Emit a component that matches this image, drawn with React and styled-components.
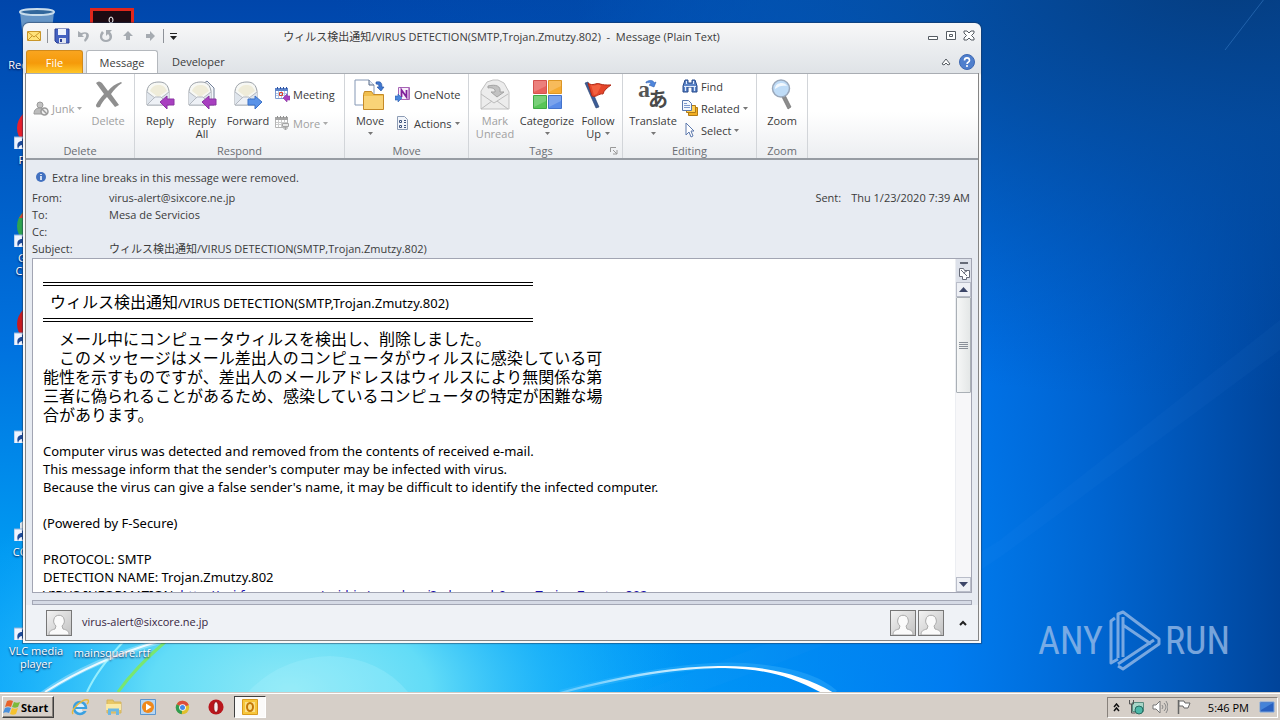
import React from "react";
import styled, { createGlobalStyle, css } from "styled-components";

const GlobalStyle = createGlobalStyle`
  * {
    box-sizing: border-box;
  }
  body {
    margin: 0;
    font-family: "Open Sans", "Noto Sans CJK JP", sans-serif;
    font-size: 11px;
    line-height: 13px;
    color: #3b3b3b;
  }
  button {
    padding: 0;
    border: 0;
    background: none;
    font: inherit;
    color: inherit;
  }
`;

/* ---------- desktop ---------- */

const Desktop = styled.div`
  display: flex;
  flex-direction: column;
  min-height: 100vh;
`;
const Screen = styled.main`
  flex: 1;
  position: relative;
  overflow: hidden;
  background: #0078e4;
`;
const WallpaperSvg = styled.svg`
  position: absolute;
  width: 100%;
  height: 100%;
`;
const Shortcut = styled.button`
  position: absolute;
  left: ${(props) => props.$x}px;
  top: ${(props) => props.$y}px;
  width: 74px;
  display: flex;
  flex-direction: column;
  align-items: center;
  color: #fff;
  text-shadow: 0 1px 2px #003;
  svg {
    margin-bottom: 4px;
  }
`;
const Watermark = styled.div`
  position: absolute;
  right: 50px;
  bottom: 19px;
  display: flex;
  align-items: center;
  gap: 3px;
  font-family: "Roboto Condensed", "Liberation Sans Narrow", "DejaVu Sans Condensed", sans-serif;
  font-size: 38px;
  line-height: 64px;
  color: #9fc0ea;
  opacity: 0.75;
`;

/* ---------- window ---------- */

const Window = styled.section`
  position: absolute;
  left: 23px;
  top: 23px;
  width: 958px;
  height: 620px;
  display: flex;
  flex-direction: column;
  padding: 1px 2px 2px;
  border-radius: 6px 6px 0 0;
  background: linear-gradient(#f7f7f8, #dfe3e7 50px, #f8f8f8 52px);
  box-shadow: 0 0 1px 1px rgba(30, 50, 80, 0.5);
`;
const TitleBar = styled.header`
  display: grid;
  grid-template-columns: 1fr auto 1fr;
  align-items: center;
  height: 26px;
  padding: 0 2px 2px 1px;
`;
const QuickAccess = styled.div`
  display: flex;
  align-items: center;
  gap: 6px;
`;
const Divider = styled.span`
  width: 1px;
  height: 14px;
  margin-left: -1px;
  background: #8e9299;
`;
const IconButton = styled.button`
  display: flex;
  width: 16px;
  height: 16px;
  align-items: center;
  justify-content: center;
`;
const Title = styled.h1`
  margin: 0;
  font-size: 11px;
  font-weight: 400;
  white-space: pre;
`;
const WindowControls = styled.div`
  display: flex;
  justify-content: flex-end;
  gap: 2px;
`;
const TabRow = styled.nav`
  display: flex;
  align-items: stretch;
  height: 23px;
  padding-right: 4px;
`;
const Tab = styled.button`
  padding: 0 12px;
  ${(props) =>
    props.$file &&
    css`
      width: 57px;
      margin: 0 3px 0 1px;
      border: 1px solid #d08a1c;
      border-bottom: 0;
      border-radius: 3px 3px 0 0;
      background: linear-gradient(#f9a51f, #f59a0a 55%, #ffc627);
      color: #fff;
    `}
  ${(props) =>
    props.$active &&
    css`
      width: 72px;
      margin: 0 2px 0 0;
      padding: 0;
      border: 1px solid #b4b8bd;
      border-bottom: 0;
      border-radius: 3px 3px 0 0;
      background: #fff;
    `}
`;
const TabTools = styled.div`
  display: flex;
  align-items: center;
  gap: 5px;
  margin-left: auto;
`;
const Pane = styled.div`
  flex: 1;
  min-height: 0;
  display: flex;
  flex-direction: column;
  border: 1px solid #858585;
  border-top: 0;
  background: #e7ebf2;
`;

/* ---------- ribbon ---------- */

const Ribbon = styled.div`
  display: flex;
  height: 87px;
  border-top: 1px solid #a9adb3;
  border-bottom: 2px solid #979ca3;
  background: linear-gradient(#fff 45%, #eceef1);
`;
const Group = styled.div`
  width: ${(props) => props.$width}px;
  display: flex;
  flex-direction: column;
  border-right: 1px solid #d2d5d9;
`;
const GroupBody = styled.div`
  flex: 1;
  display: flex;
  align-items: flex-start;
  padding-left: ${(props) => props.$pad}px;
`;
const GroupFooter = styled.div`
  display: flex;
  align-items: center;
  height: 15px;
  padding: 0 4px;
  color: #6a6d72;
  span {
    flex: 1;
    text-align: center;
  }
`;
const BigButton = styled.button`
  width: ${(props) => props.$width}px;
  display: flex;
  flex-direction: column;
  align-items: center;
  padding-top: 5px;
  &:disabled {
    color: #a0a0a0;
  }
  > svg:first-child {
    margin-bottom: 3px;
  }
`;
const InlineCaret = styled.span`
  display: flex;
  align-items: center;
  gap: 4px;
`;
const SmallColumn = styled.div`
  display: flex;
  flex-direction: column;
  gap: ${(props) => props.$gap || 0}px;
  padding-top: ${(props) => props.$top}px;
  margin-left: 1px;
`;
const SmallButton = styled.button`
  display: flex;
  align-items: center;
  gap: 3px;
  height: 22px;
  white-space: nowrap;
  &:disabled {
    color: #a0a0a0;
  }
`;

/* ---------- message ---------- */

const MessageHead = styled.div`
  padding: 8px 6px 1px;
`;
const InfoBar = styled.div`
  display: flex;
  align-items: center;
  gap: 5px;
  height: 18px;
  margin: 0 3px 3px;
`;
const FieldList = styled.dl`
  margin: 0;
`;
const Field = styled.div`
  display: flex;
  line-height: 17px;
  height: 17px;
  dt {
    width: 77px;
  }
  dd {
    margin: 0;
  }
`;
const Sent = styled.span`
  display: flex;
  gap: 10px;
  margin-left: auto;
  padding-right: 2px;
`;
const BodyBox = styled.div`
  flex: 1;
  min-height: 0;
  display: flex;
  margin: 0 6px;
  border: 1px solid #a2a5b3;
  background: #fff;
`;
const MessageText = styled.article`
  flex: 1;
  overflow: hidden;
  padding: 16px 10px 0;
  font-family: "Noto Sans", "Noto Sans CJK JP", sans-serif;
  font-size: 13px;
  line-height: 18px;
  color: #000;
  p {
    margin: 0 0 18px;
    white-space: nowrap;
  }
  a {
    color: #1a0dab;
  }
`;
const Rule = styled.hr`
  width: 490px;
  height: 4px;
  margin: 7px 0;
  border: solid #000;
  border-width: 1px 0;
`;
const Heading = styled.h2`
  height: 18px;
  margin: 0;
  padding-left: 7px;
  font-size: 13px;
  font-weight: 400;
  line-height: 16px;
`;
const Kanji = styled.span`
  font-family: "Noto Sans CJK JP", sans-serif;
  font-size: 16px;
`;
const Japanese = styled.p`
  font-family: "Noto Sans CJK JP", sans-serif;
  font-size: 16px;
  line-height: 19px;
`;
const Scrollbar = styled.div`
  width: 16px;
  display: flex;
  flex-direction: column;
  border-left: 1px solid #eceef2;
  background: #f7f7f9;
`;
const ScrollHead = styled.div`
  display: flex;
  flex-direction: column;
  align-items: center;
  height: 23px;
  padding-top: 2px;
  background: #dde1ea;
`;
const ScrollButton = styled.button`
  display: flex;
  align-items: center;
  justify-content: center;
  height: 15px;
  border: 1px solid #b9bdc9;
  background: #eef0f5;
`;
const Thumb = styled.div`
  height: 96px;
  display: flex;
  align-items: center;
  justify-content: center;
  border: 1px solid #aab0b6;
  border-radius: 1px;
  background: linear-gradient(90deg, #f6f7f7, #e4e7e7);
  margin-bottom: auto;
`;
const Splitter = styled.div`
  height: 5px;
  margin: 7px 6px 0;
  border: 1px solid #a3a7b5;
  background: #d5dae5;
`;
const People = styled.footer`
  display: flex;
  align-items: center;
  height: 35px;
  padding: 0 7px 0 20px;
  background: #eff2f6;
  color: #36253f;
`;
const Avatar = styled.svg`
  width: 26px;
  height: 26px;
  border: 1px solid #777;
  background: linear-gradient(135deg, #f2f2f2, #c2c2c2);
`;
const PersonName = styled.span`
  flex: 1;
  padding: 0 0 2px 10px;
`;
const Recipients = styled.div`
  display: flex;
  gap: 2px;
  margin-right: 11px;
`;

/* ---------- taskbar ---------- */

const Taskbar = styled.footer`
  display: flex;
  align-items: center;
  height: 28px;
  padding: 1px 2px 0;
  border-top: 1px solid #cfcac4;
  background: #d6cfc8;
  box-shadow: inset 0 1px #fff;
  color: #000;
`;
const StartButton = styled.button`
  display: flex;
  align-items: center;
  width: 52px;
  height: 22px;
  margin-right: 10px;
  border: 1px solid;
  border-color: #fff #404040 #404040 #fff;
  box-shadow: inset -1px -1px #87817b;
  font-weight: 700;
`;
const TaskButton = styled.button`
  display: flex;
  align-items: center;
  justify-content: center;
  width: 32px;
  height: 22px;
  margin-right: 2px;
  ${(props) =>
    props.$pressed &&
    css`
      border: 1px solid;
      border-color: #404040 #fff #fff #404040;
      background: #fbfaf9;
    `}
`;
const Tray = styled.div`
  display: flex;
  align-items: center;
  gap: 8px;
  height: 21px;
  margin-left: auto;
  padding: 0 2px 0 5px;
  border: 1px solid;
  border-color: #87817b #fff #fff #87817b;
`;
const Clock = styled.time`
  padding: 0 2px 0 8px;
`;

/* ---------- drawings ---------- */

const Svg = ({ w = 16, h = w, box, children }) => (
  <svg width={w} height={h} viewBox={`0 0 ${box || `${w} ${h}`}`} aria-hidden="true" fill="none">
    {children}
  </svg>
);

const Caret = ({ color = "#777" }) => (
  <Svg w={5} h={3}>
    <path d="M0 0h5L2.5 3z" fill={color} />
  </Svg>
);

const MenuCaret = () => (
  <Svg w={5} h={13}>
    <path d="M0 5h5L2.500 8z" fill="#777" />
  </Svg>
);

const Wallpaper = () => (
  <WallpaperSvg viewBox="0 0 1280 692" preserveAspectRatio="none" aria-hidden="true">
    <defs>
      <linearGradient id="sky" x1="0" y1="0" x2="0" y2="1">
        <stop offset="0" stopColor="#0046ab" />
        <stop offset=".5" stopColor="#0072df" />
        <stop offset=".8" stopColor="#009af2" />
        <stop offset="1" stopColor="#00a0fa" />
      </linearGradient>
      <linearGradient id="shade" x1="0" y1="0" x2="1" y2="0">
        <stop offset=".45" stopColor="#0078ee" stopOpacity="0" />
        <stop offset=".74" stopColor="#0074ee" stopOpacity=".8" />
        <stop offset=".86" stopColor="#005fcc" stopOpacity=".9" />
        <stop offset="1" stopColor="#00449a" />
      </linearGradient>
      <radialGradient id="dusk" gradientUnits="userSpaceOnUse" cx="0" cy="0" r="1" gradientTransform="translate(1230 -20) scale(900 420)">
        <stop offset="0" stopColor="#053d80" />
        <stop offset=".35" stopColor="#044a9c" stopOpacity=".85" />
        <stop offset="1" stopColor="#0052b4" stopOpacity="0" />
      </radialGradient>
      <radialGradient id="glow" gradientUnits="userSpaceOnUse" cx="0" cy="0" r="1" gradientTransform="translate(290 690) scale(400 220)">
        <stop offset="0" stopColor="#8ee9f6" />
        <stop offset=".35" stopColor="#62dcf7" />
        <stop offset=".65" stopColor="#2fc0fa" stopOpacity=".6" />
        <stop offset="1" stopColor="#18a8fc" stopOpacity="0" />
      </radialGradient>
      <linearGradient id="arc" x1="0" y1="0" x2="1" y2="0">
        <stop offset="0" stopColor="#7fd4ff" stopOpacity=".7" />
        <stop offset=".6" stopColor="#fff" />
        <stop offset="1" stopColor="#fff" />
      </linearGradient>
    </defs>
    <rect width="1280" height="692" fill="url(#sky)" />
    <rect width="1280" height="692" fill="url(#shade)" />
    <rect width="1280" height="692" fill="url(#dusk)" />
    <rect width="1280" height="692" fill="url(#glow)" />
    <path d="M850 612Q930 585 1000 540L1280 320V350L1010 550Q930 610 700 692H640z" fill="#5cb8ff" opacity=".04" />
    <path d="M1225 50L1268 -6" stroke="#3d82cc" strokeWidth="1" opacity=".5" />
    <path d="M42 694Q90 660 165 640" stroke="#fff" strokeWidth="5" opacity=".3" fill="none" />
    <path d="M45 692Q95 660 160 641" stroke="#fff" strokeWidth="2" fill="none" opacity=".85" />
    <path d="M87 692Q98 668 125 640" stroke="#bff" strokeWidth="2" fill="none" opacity=".7" />
    <path d="M118 692Q135 668 165 642" stroke="#7de860" strokeWidth="3" fill="none" opacity=".9" />
    <path d="M248 692Q280 658 330 656Q380 658 408 692" fill="#aef2ff" opacity=".25" />
    <path d="M560 693Q680 662 745 666T835 693" stroke="#5cc6ff" strokeWidth="6" fill="none" opacity=".25" />
    <path d="M560 692C640 670 690 666 725 666C770 666 805 676 834 693L822 693C790 676 765 669 725 668C690 668 640 673 564 693z" fill="url(#arc)" />
  </WallpaperSvg>
);

const ShortcutArrow = () => (
  <g>
    <path d="M4 22h12v14H4z" fill="#eef4ff" stroke="#8fb4dd" />
    <path d="M8 34c-2-6 1-8 4-8v-3l5 5-5 5v-3c-2 0-3 1-4 4z" fill="#1c4a9a" />
  </g>
);

const shortcuts = [
  { y: 109, color: "#e8202c", label: "Firefox" },
  { y: 207, color: "#2fa44f", top: "#d9432f", label: "Google Chrome" },
  { y: 305, color: "#c91a1f" },
  { y: 403, color: "none" },
  { y: 501, color: "none", box: true, label: "CCleaner" },
  { y: 600, color: "none", label: "VLC media player" },
];

const Letter = ({ arrow, copy }) => (
  <Svg w={32}>
    {copy && <path d="M13 8l8-6 7 7v17h-8" fill="#f4f7fb" stroke="#728098" />}
    <path d="M3 12C4 5 9 3 15 3s9 3 10 9v14H3z" fill="#f7f8f4" stroke="#9ba1a8" />
    <path d="M6 12c2-5 5-6 9-6s6 2 8 6l-9 6z" fill="#efecd9" />
    <path d="M3 12l7 7-7 7zM25 12l-7 7 7 7z" fill="#dfe5ec" />
    <path d="M3 26l8-8h6l8 8z" fill="#eef1f6" stroke="#b4b9c1" />
    <path d="M3 13l8 6M25 13l-8 6" stroke="#b4b9c1" />
    {arrow === "reply" && <path d="M16 23l7-6v3h7v6h-7v4z" fill="#a83fc0" stroke="#8a35a2" />}
    {arrow === "forward" && <path d="M30 23l-7-6v3h-7v6h7v4z" fill="#5a93e8" stroke="#3c72c8" />}
  </Svg>
);

const MarkUnreadIcon = () => (
  <Svg w={32}>
    <path d="M2 12l6-9 6-2h5l6 3 5 9v17H2z" fill="#ececec" stroke="#c0c0c0" />
    <path d="M2 15l13 9 14-9M2 30l11-8M29 30l-11-8" stroke="#bcbcbc" />
    <path d="M9 7c8-2 13 0 12 6h4l-7 5-6-5h4c1-3-3-5-7-4z" fill="#c2c2c2" stroke="#a3a3a3" />
  </Svg>
);

const DeleteIcon = () => (
  <Svg w={32}>
    <path d="M4 4c2-2 4-2 6 0l6 8c3-4 7-7 13-9l1 1c-5 3-8 7-11 11l8 11-4 2-8-10c-4 4-6 7-7 10-3 1-4 0-4-2 2-4 5-8 8-11z" fill="#8f8f8f" />
  </Svg>
);

const JunkIcon = () => (
  <Svg>
    <circle cx="7" cy="5" r="3" fill="#c2c2c2" stroke="#9a9a9a" />
    <path d="M1 14c0-5 3-6 6-6s5 2 5 6z" fill="#bcbcbc" stroke="#9a9a9a" />
    <circle cx="11.500" cy="11.500" r="3.500" fill="#eee" stroke="#9a9a9a" strokeWidth="1.500" />
    <path d="M9 9l5 5" stroke="#9a9a9a" strokeWidth="1.500" />
  </Svg>
);

const CalendarIcon = ({ gray }) => (
  <Svg>
    <path d="M1.500 3.500h12v9h-12z" fill="#fff" stroke={gray ? "#b5b5b5" : "#7c9ad0"} />
    <path d="M1 2h13v3H1z" fill={gray ? "#a5a5a5" : "#5c83ca"} />
    <path d="M3.500 1v2M6.500 1v2M9.500 1v2M12.500 1v2" stroke={gray ? "#909090" : "#2c51a0"} />
    <path d="M2 7.500h11M2 9.500h11M4.500 5v7M7.500 5v7M10.500 5v7" stroke={gray ? "#ccc" : "#b3c6e6"} />
    {gray ? (
      <path d="M8.500 8.500h6v3h-6zM11.500 12v3m-2-2l2 2 2-2" fill="#e9e9e9" stroke="#a5a5a5" />
    ) : (
      <>
        <path d="M5.500 6.500h3v3h-3z" stroke="#d9422b" />
        <path d="M9 12l4-4v2h3v4h-3v2z" fill="#a83fc0" stroke="#8a35a2" strokeWidth=".6" />
      </>
    )}
  </Svg>
);

const MoveIcon = () => (
  <Svg w={32}>
    <path d="M1 1h14l5 5v20H1z" fill="#fff" stroke="#8598b5" />
    <path d="M15 1v5h5" fill="#dfe8f4" stroke="#596b88" />
    <path d="M9.500 15.500l1-3h7l2 3h10v15h-20z" fill="#f0be4d" stroke="#c58a27" />
    <path d="M10 17h19v13H10z" fill="#f9d377" />
    <path d="M22 3c5-1 6 1 6 5h2l-3 4-4-4h2c0-2-1-3-3-3z" fill="#3f77cf" stroke="#244f9e" strokeWidth=".6" />
  </Svg>
);

const OneNoteIcon = () => (
  <Svg>
    <path d="M3.500 1.500h11v12h-11z" fill="#f8eefa" stroke="#a765b6" />
    <path d="M6.500 11V4l5 7V4" stroke="#80219a" strokeWidth="1.800" />
    <path d="M13.500 2v11" stroke="#c48bd0" />
    <path d="M0 10h3V8l4 4-4 4v-2H0z" fill="#4a86dc" stroke="#2b5fb0" strokeWidth=".6" />
  </Svg>
);

const ActionsIcon = () => (
  <Svg>
    <path d="M2.500 1.500h7l3 3v10h-10z" fill="#f2f5fa" stroke="#8d9cb5" />
    <path d="M4.500 5.500h2v2h-2zM4.500 10.500h2v2h-2z" fill="#fff" stroke="#3f5580" />
    <path d="M9 5.500h2M9 7.500h2M9 10.500h2M9 12.500h2" stroke="#3f5580" />
  </Svg>
);

const CategorizeIcon = () => (
  <Svg w={32}>
    <path d="M2.500 1.500h13v13h-13z" fill="#e8615c" stroke="#d4524e" />
    <path d="M17.500 1.500h13v13h-13z" fill="#f5ab33" stroke="#dc9625" />
    <path d="M2.500 16.500h13v13h-13z" fill="#58c558" stroke="#3fa844" />
    <path d="M17.500 16.500h13v13h-13z" fill="#5a8ce8" stroke="#4473cc" />
    <path d="M3 2h12v5L3 13zM18 2h12v5l-12 6zM3 17h12v5L3 28zM18 17h12v5l-12 6z" fill="#fff" opacity=".2" />
  </Svg>
);

const FlagIcon = () => (
  <Svg w={32}>
    <path d="M3 4l3-1 11 25-3 1z" fill="#3c5c96" stroke="#27406f" strokeWidth=".6" />
    <path d="M6 4c5 4 8-1 12 1 3 1 6 1 11 1-4 3-7 5-8 9-4-1-7 4-11 2z" fill="#e5452a" stroke="#b02a16" />
    <path d="M9 6c4 2 7-2 10 1l-4 8-3 1z" fill="#ff7d55" opacity=".5" />
  </Svg>
);

const TranslateIcon = () => (
  <Svg w={32}>
    <text x="1" y="18" fontFamily="Liberation Serif" fontSize="24" fontWeight="700" fill="#555">
      a
    </text>
    <text x="11" y="28" fontFamily="Noto Sans CJK JP" fontSize="20" fontWeight="700" fill="#4a4a4a">
      あ
    </text>
    <path d="M9 3c5-3 8-1 8 1l2-1-2 5-5-2 2-1c0-1-2-2-5-1z" fill="#4e86dd" stroke="#2b5db0" strokeWidth=".6" />
  </Svg>
);

const FindIcon = () => (
  <Svg>
    <path d="M3 2h3v3h4V2h3l2 6v6h-5V9H6v5H1V8z" fill="#5c84c6" stroke="#25488a" />
    <path d="M3.500 9v4M12.500 9v4M4.500 3v3M11.500 3v3M2 8.500h12" stroke="#e0ebfc" />
  </Svg>
);

const RelatedIcon = () => (
  <Svg>
    <path d="M6.500 7.500h9v8h-9z" fill="#f2ae22" stroke="#b07a14" />
    <path d="M4.500 5.500h9v7h-9z" fill="#ffd055" stroke="#b07a14" />
    <path d="M.5.5h6l3 3v7h-9z" fill="#f4f8fe" stroke="#5b78ad" />
    <path d="M2 3.500h3M2 5.500h6M2 7.500h6" stroke="#7f9bcf" />
  </Svg>
);

const SelectIcon = () => (
  <Svg>
    <path d="M4 1l8 8H9l2 5-2 1-2-5-3 3z" fill="#fff" stroke="#5c79ad" />
  </Svg>
);

const ZoomIcon = () => (
  <Svg w={32}>
    <path d="M16 18l3-2 6 12-3 2z" fill="#8d8d8d" stroke="#666" strokeWidth=".6" />
    <circle cx="15" cy="9.500" r="8.500" fill="#bfdcf7" stroke="#9aa8bb" strokeWidth="1.500" />
    <path d="M9 10c0-4 3-6 7-6 2 0 4 1 5 3-5-1-8 0-12 3z" fill="#fff" opacity=".8" />
  </Svg>
);

const InfoIcon = () => (
  <Svg w={12}>
    <circle cx="6" cy="6" r="5" fill="#4271c0" />
    <path d="M6 5v4M6 3v1" stroke="#fff" strokeWidth="1.500" />
  </Svg>
);

const Person = () => (
  <Avatar viewBox="0 0 24 24" aria-hidden="true">
    <path d="M2 24c0-4 2-5 6-6l1-3c-2-2-3-4-2-7 1-5 9-5 10 0 1 3 0 5-2 7l1 3c4 1 6 2 6 6z" fill="#fafafa" stroke="#aaa" />
  </Avatar>
);

const WindowsLogo = () => (
  <Svg w={18}>
    <path d="M4 3c2-1 4-1 6 0L8 9c-2-1-4-1-6 0z" fill="#e8622a" />
    <path d="M11 4c2 1 4 1 6 0l-2 5c-2 1-4 1-6 0z" fill="#7cba3c" />
    <path d="M2 10c2-1 4-1 6 0l-2 5c-2-1-4-1-6 0z" fill="#4a90dc" />
    <path d="M9 10c2 1 4 1 6 0l-2 6c-2 1-4 1-6 0z" fill="#f6c22e" />
  </Svg>
);

const IeIcon = () => (
  <Svg w={18}>
    <circle cx="9" cy="10" r="6" fill="#d9effc" stroke="#3ba0e0" strokeWidth="2.500" />
    <path d="M4 10h11" stroke="#3ba0e0" strokeWidth="2" />
    <path d="M11 12h6" stroke="#d6cfc8" strokeWidth="2" />
    <path d="M2 16C-1 12 12 0 17 2c1 1 0 3-1 4" stroke="#e8b93a" strokeWidth="1.500" />
  </Svg>
);

const ExplorerIcon = () => (
  <Svg w={18}>
    <path d="M2 2h6l1 2h7v11H2z" fill="#e8c766" stroke="#d4b45c" />
    <path d="M1 6h15v6H1z" fill="#fbe9a5" />
    <path d="M4.500 17v-5h8v5" stroke="#6cb8e4" strokeWidth="3" />
  </Svg>
);

const MediaIcon = () => (
  <Svg w={18}>
    <path d="M1.500 1.500h15v15h-15z" fill="#b7d6f2" stroke="#5b96cf" />
    <circle cx="9" cy="9" r="6" fill="#f0881b" />
    <path d="M7 5.500v7l5.500-3.500z" fill="#fff" />
  </Svg>
);

const ChromeIcon = () => (
  <Svg w={15} box="18 18">
    <circle cx="9" cy="9" r="8" fill="#e0c02f" />
    <path d="M9 9L2 5a8 8 0 0 1 14.500 1z" fill="#db4b3c" />
    <path d="M9 9L2 5a8 8 0 0 0 6 12z" fill="#2f9c52" />
    <circle cx="9" cy="9" r="4" fill="#fff" />
    <circle cx="9" cy="9" r="3" fill="#4688e8" />
  </Svg>
);

const OperaIcon = () => (
  <Svg w={16} box="18 18">
    <circle cx="9" cy="9" r="8.500" fill="#b9161c" />
    <ellipse cx="9" cy="9" rx="2.500" ry="6" fill="#f5f0f0" stroke="#8c0c10" />
  </Svg>
);

const OutlookIcon = () => (
  <Svg w={18}>
    <path d="M1.500 1.500h15v15h-15z" fill="#f7c63b" stroke="#d99a1c" />
    <path d="M4 4h10v10H4z" fill="#fbe08a" />
    <ellipse cx="9" cy="9" rx="3" ry="4" stroke="#c47808" strokeWidth="2" />
  </Svg>
);

const ToolGlyph = ({ d }) => (
  <Svg>
    <path d={d} fill="#a6abb1" />
  </Svg>
);

/* ---------- page ---------- */

const taskItems = [
  { name: "Internet Explorer", icon: <IeIcon /> },
  { name: "Windows Explorer", icon: <ExplorerIcon /> },
  { name: "Media Player", icon: <MediaIcon /> },
  { name: "Chrome", icon: <ChromeIcon /> },
  { name: "Opera", icon: <OperaIcon /> },
  { name: "Outlook", icon: <OutlookIcon />, pressed: true },
];

const subject = "ウィルス検出通知/VIRUS DETECTION(SMTP,Trojan.Zmutzy.802)";

const RibbonGroup = ({ name, width, pad, launcher, children }) => (
  <Group $width={width}>
    <GroupBody $pad={pad}>{children}</GroupBody>
    <GroupFooter>
      <span>{name}</span>
      {launcher && (
        <Svg w={9}>
          <path d="M1.500 6V1.500H7M4 4l4 4M8 4v4H4" stroke="#999" />
        </Svg>
      )}
    </GroupFooter>
  </Group>
);

const MessageRibbon = () => (
  <Ribbon>
    <RibbonGroup name="Delete" width={109} pad={6}>
      <SmallColumn $top={23}>
        <SmallButton disabled>
          <JunkIcon />
          Junk
          <Caret color="#aaa" />
        </SmallButton>
      </SmallColumn>
      <BigButton $width={52} disabled>
        <DeleteIcon />
        Delete
      </BigButton>
    </RibbonGroup>
    <RibbonGroup name="Respond" width={210} pad={4}>
      <BigButton $width={42}>
        <Letter arrow="reply" />
        Reply
      </BigButton>
      <BigButton $width={42}>
        <Letter arrow="reply" copy />
        Reply
        <br />
        All
      </BigButton>
      <BigButton $width={50}>
        <Letter arrow="forward" />
        Forward
      </BigButton>
      <SmallColumn $top={9} $gap={7}>
        <SmallButton>
          <CalendarIcon />
          Meeting
        </SmallButton>
        <SmallButton disabled>
          <CalendarIcon gray />
          More
          <Caret color="#aaa" />
        </SmallButton>
      </SmallColumn>
    </RibbonGroup>
    <RibbonGroup name="Move" width={124} pad={1}>
      <BigButton $width={48}>
        <MoveIcon />
        Move
        <MenuCaret />
      </BigButton>
      <SmallColumn $top={9} $gap={7}>
        <SmallButton>
          <OneNoteIcon />
          OneNote
        </SmallButton>
        <SmallButton>
          <ActionsIcon />
          Actions
          <Caret />
        </SmallButton>
      </SmallColumn>
    </RibbonGroup>
    <RibbonGroup name="Tags" width={154} pad={3} launcher>
      <BigButton $width={46} disabled>
        <MarkUnreadIcon />
        Mark
        <br />
        Unread
      </BigButton>
      <BigButton $width={58}>
        <CategorizeIcon />
        Categorize
        <MenuCaret />
      </BigButton>
      <BigButton $width={44}>
        <FlagIcon />
        Follow
        <InlineCaret>
          Up
          <Caret />
        </InlineCaret>
      </BigButton>
    </RibbonGroup>
    <RibbonGroup name="Editing" width={134} pad={2}>
      <BigButton $width={56}>
        <TranslateIcon />
        Translate
        <MenuCaret />
      </BigButton>
      <SmallColumn $top={1}>
        <SmallButton>
          <FindIcon />
          Find
        </SmallButton>
        <SmallButton>
          <RelatedIcon />
          Related
          <Caret />
        </SmallButton>
        <SmallButton>
          <SelectIcon />
          Select
          <Caret />
        </SmallButton>
      </SmallColumn>
    </RibbonGroup>
    <RibbonGroup name="Zoom" width={51} pad={2}>
      <BigButton $width={46}>
        <ZoomIcon />
        Zoom
      </BigButton>
    </RibbonGroup>
  </Ribbon>
);

const MessageHeader = () => (
  <MessageHead>
    <InfoBar>
      <InfoIcon />
      Extra line breaks in this message were removed.
    </InfoBar>
    <FieldList>
      <Field>
        <dt>From:</dt>
        <dd>virus-alert@sixcore.ne.jp</dd>
        <Sent>
          <span>Sent:</span>
          <time>Thu 1/23/2020 7:39 AM</time>
        </Sent>
      </Field>
      <Field>
        <dt>To:</dt>
        <dd>Mesa de Servicios</dd>
      </Field>
      <Field>
        <dt>Cc:</dt>
        <dd />
      </Field>
      <Field>
        <dt>Subject:</dt>
        <dd>{subject}</dd>
      </Field>
    </FieldList>
  </MessageHead>
);

const MessageBody = () => (
  <BodyBox>
    <MessageText>
      <Rule />
      <Heading>
        <Kanji>ウィルス検出通知</Kanji>/VIRUS DETECTION(SMTP,Trojan.Zmutzy.802)
      </Heading>
      <Rule />
      <Japanese>
        {"　メール中にコンピュータウィルスを検出し、削除しました。"}
        <br />
        {"　このメッセージはメール差出人のコンピュータがウィルスに感染している可"}
        <br />
        能性を示すものですが、差出人のメールアドレスはウィルスにより無関係な第
        <br />
        三者に偽られることがあるため、感染しているコンピュータの特定が困難な場
        <br />
        合があります。
      </Japanese>
      <p>
        Computer virus was detected and removed from the contents of received e-mail.
        <br />
        This message inform that the sender's computer may be infected with virus.
        <br />
        Because the virus can give a false sender's name, it may be difficult to identify the infected computer.
      </p>
      <p>(Powered by F-Secure)</p>
      <p>
        PROTOCOL: SMTP
        <br />
        DETECTION NAME: Trojan.Zmutzy.802
        <br />
        VIRUS INFORMATION: <a href="#info">http://cgi.f-secure.com/cgi-bin/search.cgi?advsearch&qry=Trojan.Zmutzy.802</a>
      </p>
    </MessageText>
    <Scrollbar>
      <ScrollHead>
        <Svg w={14} h={20}>
          <path d="M3 1h8v2H3z" fill="#666b78" />
          <path d="M2.500 7.500h4l1 2h5v7h-3v2h-4v-3h-3zM4 9l6 6M6 12l4-2" stroke="#666b78" fill="#fff" />
        </Svg>
      </ScrollHead>
      <ScrollButton aria-label="Scroll up">
        <Svg w={9} h={5}>
          <path d="M0 5h9L4.500 0z" fill="#3c4668" />
        </Svg>
      </ScrollButton>
      <Thumb>
        <Svg w={9} h={7}>
          <path d="M0 .5h9M0 2.500h9M0 4.500h9M0 6.500h9" stroke="#898f98" />
        </Svg>
      </Thumb>
      <ScrollButton aria-label="Scroll down">
        <Svg w={9} h={5}>
          <path d="M0 0h9L4.500 5z" fill="#3c4668" />
        </Svg>
      </ScrollButton>
    </Scrollbar>
  </BodyBox>
);

const MessageWindow = () => (
  <Window>
    <TitleBar>
      <QuickAccess>
        <Svg>
          <path d="M1.500 3.500h13v9h-13z" fill="#ffe27a" stroke="#c9962a" />
          <path d="M2 4l6 5 6-5M2 12l4-4M14 12l-4-4" stroke="#c9962a" />
        </Svg>
        <Divider />
        <IconButton aria-label="Save">
          <Svg>
            <path d="M1 1h14v14H3l-2-2z" fill="#4562c0" stroke="#2b3f94" />
            <path d="M4 1h8v6H4z" fill="#eef3fc" />
            <path d="M5 10h7v5H5z" fill="#dfe4ef" />
            <path d="M6 11h2v3H6z" fill="#2b3f94" />
          </Svg>
        </IconButton>
        <IconButton aria-label="Undo">
          <ToolGlyph d="M2 3v6h6L6 7c4-3 6 0 2 5l1 2c7-6 4-12-4-9z" />
        </IconButton>
        <IconButton aria-label="Redo">
          <ToolGlyph d="M8 2v6l2-2c3 3 1 6-2 6-4 0-5-4-2-7L4 3c-4 5-2 11 4 11s8-6 4-10l2-2z" />
        </IconButton>
        <IconButton aria-label="Previous item">
          <ToolGlyph d="M8 3l5 5h-3v4H6V8H3z" />
        </IconButton>
        <IconButton aria-label="Next item">
          <ToolGlyph d="M13 8l-5 5v-3H4V6h4V3z" />
        </IconButton>
        <Divider />
        <Svg w={7} h={8}>
          <path d="M0 1.500h7" stroke="#222" />
          <path d="M0 4h7L3.500 8z" fill="#222" />
        </Svg>
      </QuickAccess>
      <Title>{`${subject}  -  Message (Plain Text)`}</Title>
      <WindowControls>
        <IconButton aria-label="Minimize">
          <Svg w={12}>
            <path d="M1.500 6.500h9v3h-9z" fill="#fff" stroke="#555b62" />
          </Svg>
        </IconButton>
        <IconButton aria-label="Maximize">
          <Svg w={12}>
            <path d="M1.500 1.500h9v8h-9zM4.500 4.500h3v2h-3z" fill="#fff" stroke="#555b62" />
          </Svg>
        </IconButton>
        <IconButton aria-label="Close">
          <Svg w={12}>
            <path d="M1 1h3l2 2 2-2h3v2L8.500 5.500 11 8v2H8L6 8l-2 2H1V8l2.500-2.500L1 3z" fill="#fff" stroke="#555b62" />
          </Svg>
        </IconButton>
      </WindowControls>
    </TitleBar>
    <TabRow>
      <Tab $file>File</Tab>
      <Tab $active>Message</Tab>
      <Tab>Developer</Tab>
      <TabTools>
        <IconButton aria-label="Collapse ribbon">
          <Svg w={10} h={8}>
            <path d="M1 6l4-5 4 5-2 1-2-2-2 2z" fill="#fff" stroke="#555b62" />
          </Svg>
        </IconButton>
        <IconButton aria-label="Help">
          <Svg>
            <circle cx="8" cy="8" r="7.500" fill="#4f7fcd" stroke="#3d68b3" />
            <path d="M5.500 6.500c0-3.500 5-3.500 5 0 0 2-2.500 1.500-2.500 3.500M8 11v2" stroke="#fff" strokeWidth="1.600" />
          </Svg>
        </IconButton>
      </TabTools>
    </TabRow>
    <Pane>
      <MessageRibbon />
      <MessageHeader />
      <MessageBody />
      <Splitter />
      <People>
        <Person />
        <PersonName>virus-alert@sixcore.ne.jp</PersonName>
        <Recipients>
          <Person />
          <Person />
        </Recipients>
        <IconButton aria-label="Expand people pane">
          <Svg w={8} h={6}>
            <path d="M1 5l3-3 3 3" stroke="#222" strokeWidth="2" />
          </Svg>
        </IconButton>
      </People>
    </Pane>
  </Window>
);

const App = () => (
  <Desktop>
    <GlobalStyle />
    <Screen>
      <Wallpaper />
      <Shortcut $x={0} $y={8}>
        <Svg w={36} h={46}>
          <path d="M1 4l4 36h26l4-36z" fill="#7fa9cc" opacity=".8" />
          <ellipse cx="18" cy="4" rx="17" ry="3" fill="#32679c" stroke="#c8dcec" strokeWidth="2" />
        </Svg>
        Recycle Bin
      </Shortcut>
      <Shortcut $x={75} $y={8}>
        <Svg w={44} h={40}>
          <path d="M1.500 1.500h41v37h-41z" fill="#1d0a12" stroke="#e0271c" strokeWidth="3" />
          <ellipse cx="21" cy="12" rx="2" ry="3" stroke="#fff" />
        </Svg>
      </Shortcut>
      {shortcuts.map((item) => (
        <Shortcut key={item.y} $x={-1} $y={item.y}>
          <Svg w={44} h={40}>
            <circle cx="22" cy="19" r="19" fill={item.color} />
            {item.top && <path d="M5 11a19 19 0 0 1 34 0z" fill={item.top} />}
            {item.box && <path d="M6 22l8-5h16v18H6z" fill="#dfe5ea" />}
            <g transform="translate(-4 6)">
              <ShortcutArrow />
            </g>
          </Svg>
          {item.label}
        </Shortcut>
      ))}
      <Shortcut $x={75} $y={600}>
        <Svg w={36} h={42} />
        mainsquare.rtf
      </Shortcut>
      <Watermark>
        ANY
        <Svg w={56} h={64}>
          <path
            d="M12 50L5 54V12L9 9M12 49V5L17 3 53 30v5L17 60l-5-3M12 55l36-24M17 8v40M17 16l28 19"
            stroke="#9fc0ea"
            strokeWidth="3"
            strokeLinejoin="round"
          />
        </Svg>
        RUN
      </Watermark>
      <MessageWindow />
    </Screen>
    <Taskbar>
      <StartButton>
        <WindowsLogo />
        Start
      </StartButton>
      {taskItems.map((item) => (
        <TaskButton key={item.name} $pressed={item.pressed} aria-label={item.name}>
          {item.icon}
        </TaskButton>
      ))}
      <Tray>
        <Svg w={7} h={9}>
          <path d="M1 4l2.500-3L6 4M1 8l2.500-3L6 8" stroke="#111" strokeWidth="1.500" />
        </Svg>
        <Svg>
          <path d="M4.500 3.500h11v9h-11z" fill="#a9d6c8" stroke="#5b8d80" />
          <circle cx="11" cy="11" r="4" fill="#4cb8a8" stroke="#276b60" />
          <path d="M1.500 1v4h4V1M3.500 5v9h4" stroke="#555" />
        </Svg>
        <Svg>
          <path d="M1 6h3l4-4v12l-4-4H1z" fill="#fff" stroke="#777" />
          <path d="M10 6q2 2 0 4M12 4q4 4 0 8M14 2q4 6 0 12" stroke="#888" />
        </Svg>
        <Svg>
          <path d="M2.500 1v14" stroke="#666" strokeWidth="1.500" />
          <path d="M3 2h5l1 2h5l-2 5H8L7 7H3z" fill="#fff" stroke="#666" />
        </Svg>
        <Clock>5:46 PM</Clock>
        <Svg>
          <path d="M1 3h14v10H1z" fill="#2860c0" stroke="#7ba4dc" />
          <path d="M2 4h12L2 11z" fill="#4583d8" />
        </Svg>
      </Tray>
    </Taskbar>
  </Desktop>
);

export default App;
